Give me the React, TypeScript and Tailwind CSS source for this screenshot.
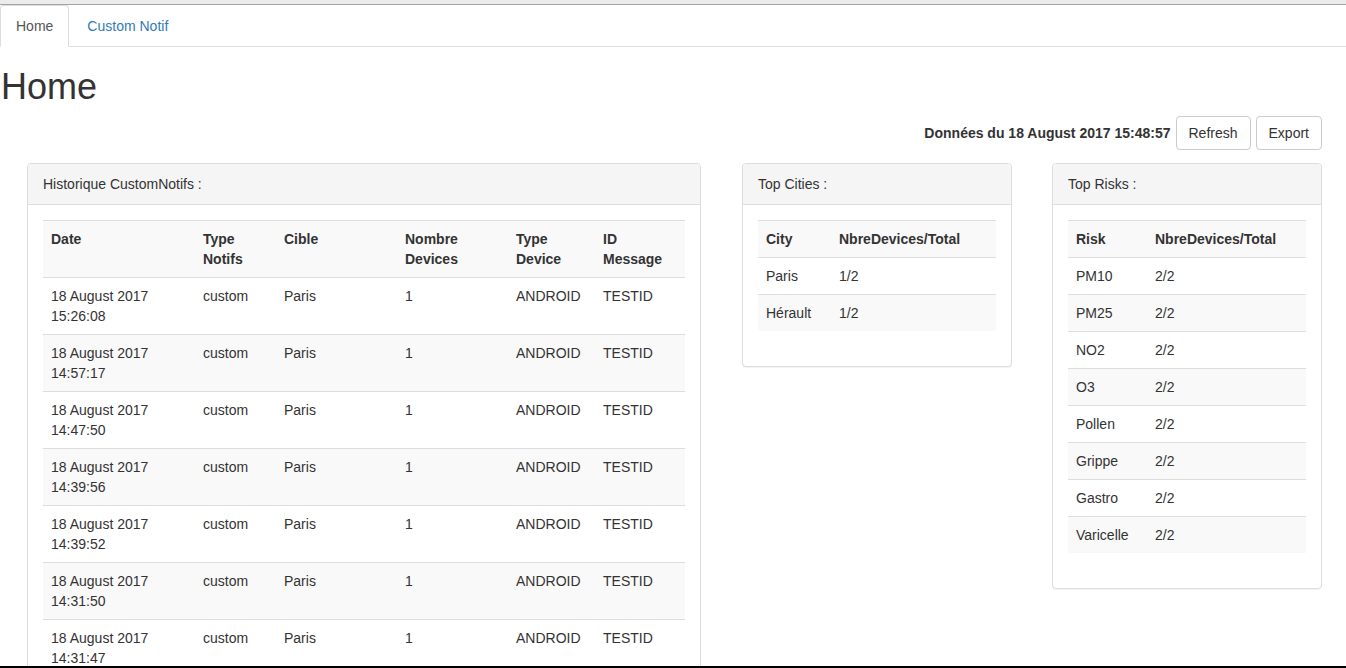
import React from "react";

const notifs = [
  ["15:26:08"],
  ["14:57:17"],
  ["14:47:50"],
  ["14:39:56"],
  ["14:39:52"],
  ["14:31:50"],
  ["14:31:47"],
];

const cities = [
  ["Paris", "1/2"],
  ["Hérault", "1/2"],
];

const risks = [
  ["PM10", "2/2"],
  ["PM25", "2/2"],
  ["NO2", "2/2"],
  ["O3", "2/2"],
  ["Pollen", "2/2"],
  ["Grippe", "2/2"],
  ["Gastro", "2/2"],
  ["Varicelle", "2/2"],
];

function rowBg(i: number) {
  // header row counts as the first (odd) row of the striped table
  return i % 2 === 0 ? "bg-[#f9f9f9]" : "bg-white";
}

function Panel({ title, children }: { title: string; children: React.ReactNode }) {
  return (
    <section className="border border-[#dddddd] rounded-[4px] bg-white shadow-[0_1px_1px_rgba(0,0,0,0.05)] self-start">
      <div className="bg-[#f5f5f5] border-b border-[#dddddd] rounded-t-[3px] px-[15px] py-[10px] text-[14px] leading-[20px] text-[#333333]">
        {title}
      </div>
      <div className="p-[15px]">{children}</div>
    </section>
  );
}

const th = "border-t border-[#dddddd] p-[8px] text-left align-top font-bold";
const td = "border-t border-[#dddddd] p-[8px] align-top";

export default function App() {
  return (
    <div className="h-[668px] overflow-hidden border-b-2 border-black bg-white text-[14px] leading-[20px] text-[#333333] font-['Liberation_Sans',Arial,sans-serif]">
      <div className="h-[4px] bg-[#ececec] border-b border-[#a3a3a3] box-content" />

      <ul className="flex border-b border-[#dddddd]">
        <li className="-mb-px mr-[2px]">
          <span className="block px-[15px] py-[10px] border border-[#dddddd] border-b-transparent rounded-t-[4px] bg-white text-[#555555]">
            Home
          </span>
        </li>
        <li className="-mb-px mr-[2px]">
          <a className="block px-[15px] py-[10px] border border-transparent text-[#337ab7]">
            Custom Notif
          </a>
        </li>
      </ul>

      <h1 className="mt-[20px] mb-[9px] text-[36px] leading-[1.1] font-medium pl-[1px]">Home</h1>

      <div className="flex justify-end items-center gap-[5px] pr-[24px]">
        <strong className="font-bold">Données du 18 August 2017 15:48:57</strong>
        <button className="px-[12px] py-[6px] border border-[#cccccc] rounded-[4px] bg-white text-[#333333]">
          Refresh
        </button>
        <button className="px-[12px] py-[6px] border border-[#cccccc] rounded-[4px] bg-white text-[#333333]">
          Export
        </button>
      </div>

      <div className="mt-[13px] pl-[27px] flex items-start">
        <div className="w-[674px] shrink-0">
          <Panel title="Historique CustomNotifs :">
            <table className="w-full table-fixed border-collapse mb-[20px]">
              <tbody>
                <tr className={rowBg(0)}>
                  <th className={`${th} w-[152px]`}>Date</th>
                  <th className={`${th} w-[81px]`}>Type Notifs</th>
                  <th className={`${th} w-[121px]`}>Cible</th>
                  <th className={`${th} w-[111px]`}>Nombre Devices</th>
                  <th className={`${th} w-[87px]`}>Type Device</th>
                  <th className={th}>ID Message</th>
                </tr>
                {notifs.map(([time], i) => (
                  <tr key={time + i} className={rowBg(i + 1)}>
                    <td className={td}>18 August 2017 {time}</td>
                    <td className={td}>custom</td>
                    <td className={td}>Paris</td>
                    <td className={td}>1</td>
                    <td className={td}>ANDROID</td>
                    <td className={td}>TESTID</td>
                  </tr>
                ))}
              </tbody>
            </table>
          </Panel>
        </div>

        <div className="w-[270px] shrink-0 ml-[41px]">
          <Panel title="Top Cities :">
            <table className="w-full table-fixed border-collapse mb-[20px]">
              <tbody>
                <tr className={rowBg(0)}>
                  <th className={`${th} w-[73px]`}>City</th>
                  <th className={th}>NbreDevices/Total</th>
                </tr>
                {cities.map(([city, n], i) => (
                  <tr key={city} className={rowBg(i + 1)}>
                    <td className={td}>{city}</td>
                    <td className={td}>{n}</td>
                  </tr>
                ))}
              </tbody>
            </table>
          </Panel>
        </div>

        <div className="w-[270px] shrink-0 ml-[40px]">
          <Panel title="Top Risks :">
            <table className="w-full table-fixed border-collapse mb-[20px]">
              <tbody>
                <tr className={rowBg(0)}>
                  <th className={`${th} w-[79px]`}>Risk</th>
                  <th className={th}>NbreDevices/Total</th>
                </tr>
                {risks.map(([risk, n], i) => (
                  <tr key={risk} className={rowBg(i + 1)}>
                    <td className={td}>{risk}</td>
                    <td className={td}>{n}</td>
                  </tr>
                ))}
              </tbody>
            </table>
          </Panel>
        </div>
      </div>
    </div>
  );
}
